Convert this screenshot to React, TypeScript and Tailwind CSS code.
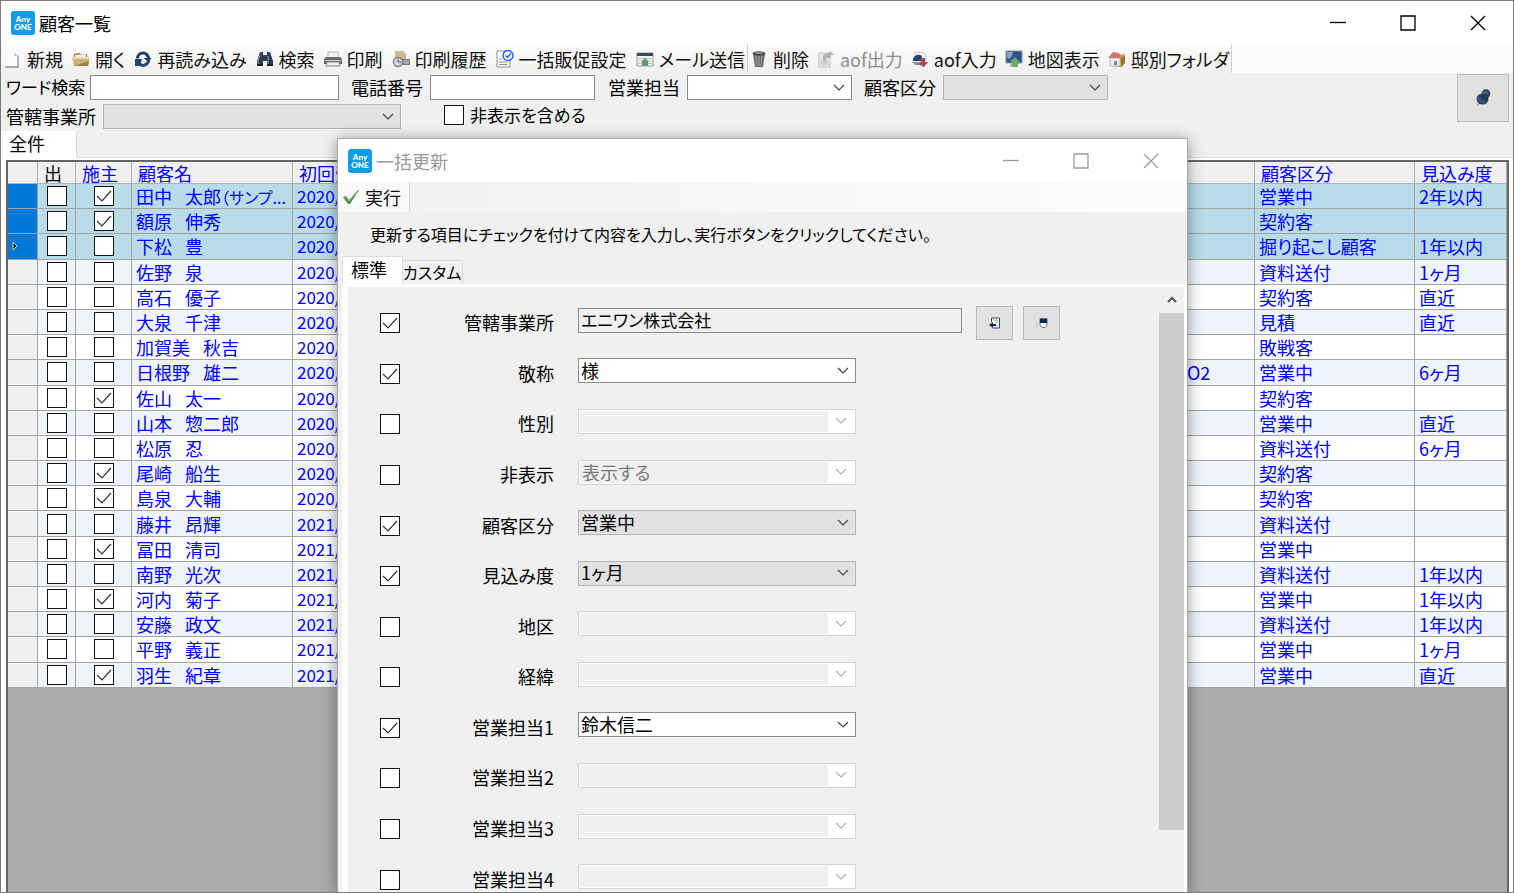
import { useState } from 'react';
import type { ReactNode } from 'react';
import clsx from 'clsx';

interface Customer {
  family: string;
  given: string;
  note?: string;
  owner: boolean;
  date: string;
  code?: string;
  category: string;
  prospect: string;
}

interface UpdateField {
  id: string;
  label: string;
  enabled: boolean;
  value: string;
  kind: 'office' | 'combo' | 'list';
}

const customers: Customer[] = [
  { family: '田中', given: '太郎', note: '（サンプ...', owner: true, date: '2020/', category: '営業中', prospect: '2年以内' },
  { family: '額原', given: '伸秀', owner: true, date: '2020/', category: '契約客', prospect: '' },
  { family: '下松', given: '豊', owner: false, date: '2020/', category: '掘り起こし顧客', prospect: '1年以内' },
  { family: '佐野', given: '泉', owner: false, date: '2020/', category: '資料送付', prospect: '1ヶ月' },
  { family: '高石', given: '優子', owner: false, date: '2020/', category: '契約客', prospect: '直近' },
  { family: '大泉', given: '千津', owner: false, date: '2020/', category: '見積', prospect: '直近' },
  { family: '加賀美', given: '秋吉', owner: false, date: '2020/', category: '敗戦客', prospect: '' },
  { family: '日根野', given: '雄二', owner: false, date: '2020/', code: 'O2', category: '営業中', prospect: '6ヶ月' },
  { family: '佐山', given: '太一', owner: true, date: '2020/', category: '契約客', prospect: '' },
  { family: '山本', given: '惣二郎', owner: false, date: '2020/', category: '営業中', prospect: '直近' },
  { family: '松原', given: '忍', owner: false, date: '2020/', category: '資料送付', prospect: '6ヶ月' },
  { family: '尾崎', given: '船生', owner: true, date: '2020/', category: '契約客', prospect: '' },
  { family: '島泉', given: '大輔', owner: true, date: '2020/', category: '契約客', prospect: '' },
  { family: '藤井', given: '昂輝', owner: false, date: '2021/', category: '資料送付', prospect: '' },
  { family: '冨田', given: '清司', owner: true, date: '2021/', category: '営業中', prospect: '' },
  { family: '南野', given: '光次', owner: false, date: '2021/', category: '資料送付', prospect: '1年以内' },
  { family: '河内', given: '菊子', owner: true, date: '2021/', category: '営業中', prospect: '1年以内' },
  { family: '安藤', given: '政文', owner: false, date: '2021/', category: '資料送付', prospect: '1年以内' },
  { family: '平野', given: '義正', owner: false, date: '2021/', category: '営業中', prospect: '1ヶ月' },
  { family: '羽生', given: '紀章', owner: true, date: '2021/', category: '営業中', prospect: '直近' },
];

const initialFields: UpdateField[] = [
  { id: 'office', label: '管轄事業所', enabled: true, value: 'エニワン株式会社', kind: 'office' },
  { id: 'honorific', label: '敬称', enabled: true, value: '様', kind: 'combo' },
  { id: 'gender', label: '性別', enabled: false, value: '', kind: 'combo' },
  { id: 'hidden', label: '非表示', enabled: false, value: '表示する', kind: 'combo' },
  { id: 'category', label: '顧客区分', enabled: true, value: '営業中', kind: 'list' },
  { id: 'prospect', label: '見込み度', enabled: true, value: '1ヶ月', kind: 'list' },
  { id: 'area', label: '地区', enabled: false, value: '', kind: 'combo' },
  { id: 'route', label: '経緯', enabled: false, value: '', kind: 'combo' },
  { id: 'sales1', label: '営業担当1', enabled: true, value: '鈴木信二', kind: 'combo' },
  { id: 'sales2', label: '営業担当2', enabled: false, value: '', kind: 'combo' },
  { id: 'sales3', label: '営業担当3', enabled: false, value: '', kind: 'combo' },
  { id: 'sales4', label: '営業担当4', enabled: false, value: '', kind: 'combo' },
];

function Icon({ children }: { children: ReactNode }) {
  return (
    <svg viewBox="0 0 18 18" className="size-[18px] shrink-0" aria-hidden="true">
      {children}
    </svg>
  );
}

const NewIcon = () => (
  <Icon>
    <path d="M2 2h8l4 4v11H2z" fill="#fbfbfb" />
    <path d="M10 2l4 4h-4z" fill="#cfcfcf" />
    <path d="M14 6v11H1.500" fill="none" stroke="#8c8c8c" strokeWidth="1.300" />
  </Icon>
);

const OpenIcon = () => (
  <Icon>
    <path d="M2 4l5-1 2 1h6v5H2z" fill="#8d7a55" />
    <path d="M3 5l11-1v4H3z" fill="#f6f1e2" />
    <path d="M0 7h18l-2 9H2z" fill="#cfb27a" />
    <path d="M0 7h18v2H1z" fill="#ecdcb4" />
    <path d="M2 16h14l1-5z" fill="#a08148" />
  </Icon>
);

const ReloadIcon = () => (
  <Icon>
    <path d="M3.500 8.500a5.500 5.500 0 0 1 11 0" fill="none" stroke="#1d3f66" strokeWidth="3" />
    <path d="M14.500 9a5.500 5.500 0 0 1-9 5" fill="none" stroke="#24486f" strokeWidth="3" />
    <path d="M9.500 8h8l-3 4z" fill="#1d3f66" />
    <path d="M1 9h7l-2 7H1z" fill="#24486f" />
  </Icon>
);

const BinocularsIcon = () => (
  <Icon>
    <path d="M4 2h3v3h4V2h3l3 9v5h-6v-5H7v5H1v-5z" fill="#2c3f52" />
    <path d="M4 5L2 11v4M12 6v8" stroke="#8fa5b8" strokeWidth="1" fill="none" />
    <path d="M1 14h6v2H1zM11 14h6v2h-6z" fill="#141f2b" />
  </Icon>
);

const PrinterIcon = () => (
  <Icon>
    <path d="M4 2h10v7H4z" fill="#f2f2f2" stroke="#b8b8b8" />
    <path d="M0 9l2-2h14l2 2v5H0z" fill="#6a6a6a" />
    <path d="M1 10h16v1H1z" fill="#c8c8c8" />
    <path d="M3 12h12l1 4H2z" fill="#ededed" stroke="#8a8a8a" />
  </Icon>
);

const PrintHistoryIcon = () => (
  <Icon>
    <path d="M3 1h9v9H3z" fill="#cdb98c" />
    <path d="M9 9h9v6H9z" fill="#777" />
    <path d="M13 3v6" stroke="#b5b5b5" strokeWidth="2" />
    <path d="M10 11h7M12 13h5" stroke="#ddd" />
    <circle cx="6" cy="12" r="4.500" fill="#d5d8dc" stroke="#7d8286" strokeWidth="1.500" />
    <path d="M6 9v3h3" stroke="#555" fill="none" />
  </Icon>
);

const PromoIcon = () => (
  <Icon>
    <path d="M1 1h13v16H1z" fill="#fafafa" stroke="#8b8b8b" />
    <path d="M3 12h8M3 14.500h8" stroke="#8b8b8b" />
    <path d="M3 9h3" stroke="#8b8b8b" />
    <circle cx="12" cy="5.500" r="5" fill="#fff" stroke="#2160f0" strokeWidth="1.400" />
    <path d="M9.500 5.500l2 2L15 3.500" fill="none" stroke="#2160f0" strokeWidth="1.500" />
  </Icon>
);

const MailIcon = () => (
  <Icon>
    <path d="M1 3h16v13H1z" fill="#f4f4f0" stroke="#99a39b" />
    <path d="M1 3h16v3H1z" fill="#2f4c5e" />
    <path d="M2 8.500h14M2 11h14M2 13.500h14" stroke="#bbc4bd" />
    <path d="M9 8l4 4h-1v4H6v-4H5z" fill="#5f9e6c" />
  </Icon>
);

const TrashIcon = () => (
  <Icon>
    <path d="M3 4h12l-2 13H5z" fill="#696969" />
    <path d="M6 6l1 10M9 6v10M12 6l-1 10" stroke="#a5a5a5" />
    <ellipse cx="9" cy="3.500" rx="6.500" ry="2.200" fill="#4a4a4a" />
    <ellipse cx="9" cy="3" rx="4" ry="1" fill="#8c8c8c" />
  </Icon>
);

const ExportIcon = () => (
  <Icon>
    <path d="M2 3h11v14H2z" fill="#e3e3e3" stroke="#c4c4c4" />
    <path d="M4 14h7M4 12h7" stroke="#bbb" />
    <path d="M6 11V7q0-3 3-3h1l3-3 4 4h-3v1q0 2-2 2H9v3z" fill="#b4b4b4" />
  </Icon>
);

const ImportIcon = () => (
  <Icon>
    <path d="M4 2h8l3 3v9H4z" fill="#eeeeee" stroke="#ccc" />
    <path d="M2 9c2-5 6-5 9-3l-1 5H2z" fill="#2a4467" />
    <path d="M1 12h9l3 3H4z" fill="#8795a3" />
    <path d="M10 8h4v4h3l-4 5-6-3 3-2z" fill="#b04a4f" />
  </Icon>
);

const MapIcon = () => (
  <Icon>
    <path d="M1 1h16v12H1z" fill="#2c5688" stroke="#8796a5" />
    <path d="M2 2h6l-1 4-3 3-2-2z" fill="#8aa9c9" />
    <path d="M5 14h8v3H5z" fill="#b3b9b5" />
    <path d="M10 7l5 5h-2v5H7v-5H5z" fill="#6aa870" />
  </Icon>
);

const HouseFolderIcon = () => (
  <Icon>
    <path d="M9 5l8-1v9l-3 4H8z" fill="#c4a05a" />
    <path d="M12 8l5-2v7l-4 4z" fill="#9a762f" />
    <path d="M2 8h10v8H2z" fill="#efefef" stroke="#b7b7b7" />
    <path d="M0 8l5-6 6 1 3 6-3-1H2z" fill="#d4746a" />
    <path d="M6 11h3v4H6z" fill="#7a8aa0" />
  </Icon>
);

const PinIcon = () => (
  <svg viewBox="0 0 18 20" className="h-5 w-[18px]" aria-hidden="true">
    <path d="M6 14l-3 4" stroke="#a9a9a9" strokeWidth="1.500" />
    <ellipse cx="8.500" cy="11" rx="6" ry="5.500" fill="#2a4663" />
    <path d="M7 8l3-5 5 5-2 4z" fill="#1b3048" />
    <circle cx="12" cy="5.500" r="4.300" fill="#24405c" />
    <ellipse cx="11.500" cy="4.500" rx="2.500" ry="1.500" fill="#4c6a88" />
    <path d="M4 9c0 3 2 5 6 5" stroke="#5b7896" fill="none" />
  </svg>
);

const GreenCheckIcon = () => (
  <Icon>
    <path d="M1 9l3-1 3 4L16 2l1 0L8 16H6z" fill="#4d8a4b" />
    <path d="M2 9l2 0 3 4.500L15 4" fill="none" stroke="#8cba86" />
  </Icon>
);

const PickIcon = () => (
  <svg viewBox="0 0 12 12" className="size-3" aria-hidden="true">
    <path d="M2.500 1h8v10h-7M2.500 1v4" fill="#fff" stroke="#2c4a6e" />
    <path d="M4 3h5M6 5h3M7 9h2" stroke="#b09a90" />
    <path d="M0 8l4-3v2h3v2H4v2z" fill="#0c2a56" />
  </svg>
);

const ClearIcon = () => (
  <svg viewBox="0 0 12 12" className="size-3" aria-hidden="true">
    <path d="M1 4v8" stroke="#cfcfcf" strokeWidth="1.500" />
    <path d="M4 1.500h7V8l-2 2.500H6L4 8z" fill="#fff" stroke="#5a7391" />
    <path d="M4 2h7v4H4z" fill="#0c2a56" />
  </svg>
);

function Chevron({ muted }: { muted?: boolean }) {
  return (
    <svg viewBox="0 0 12 8" className="h-2 w-3 shrink-0" aria-hidden="true">
      <path d="M1 1l5 5 5-5" fill="none" stroke={muted ? '#b0b0b0' : '#444'} strokeWidth="1.200" />
    </svg>
  );
}

function AppLogo() {
  return (
    <span className="flex size-6 shrink-0 flex-col items-center justify-center rounded-[3px] bg-[#109be5] font-[Lato,sans-serif] text-[8px] leading-[8px] font-black text-white">
      <span>Any</span>
      <span>ONE</span>
    </span>
  );
}

function WindowButtons({ color }: { color: string }) {
  return (
    <div className="flex self-stretch">
      <button type="button" aria-label="最小化" className="flex w-[70px] items-center justify-center">
        <svg viewBox="0 0 16 16" className="size-4">
          <path d="M0 7.500h16" stroke={color} strokeWidth="1.300" />
        </svg>
      </button>
      <button type="button" aria-label="最大化" className="flex w-[70px] items-center justify-center">
        <svg viewBox="0 0 16 16" className="size-4">
          <path d="M1 1h14v14H1z" fill="none" stroke={color} strokeWidth="1.300" />
        </svg>
      </button>
      <button type="button" aria-label="閉じる" className="flex w-[70px] items-center justify-center">
        <svg viewBox="0 0 16 16" className="size-4">
          <path d="M1 1l14 14M15 1L1 15" stroke={color} strokeWidth="1.300" />
        </svg>
      </button>
    </div>
  );
}

interface CheckboxProps {
  id?: string;
  label?: string;
  checked: boolean;
  onChange: () => void;
}

function Checkbox({ id, label, checked, onChange }: CheckboxProps) {
  return (
    <span className="inline-grid size-5 shrink-0 align-top">
      <input
        id={id}
        type="checkbox"
        aria-label={label}
        checked={checked}
        onChange={onChange}
        className="size-5 appearance-none border border-[#111] bg-white [grid-area:1/1]"
      />
      {checked && (
        <svg viewBox="0 0 20 20" className="pointer-events-none size-5 [grid-area:1/1]" aria-hidden="true">
          <path d="M3 10l5 5 9-10" fill="none" stroke="#333" strokeWidth="1.200" />
        </svg>
      )}
    </span>
  );
}

interface ComboProps {
  id: string;
  value?: string;
  disabled?: boolean;
  gray?: boolean;
  className: string;
}

function Combo({ id, value = '', disabled, gray, className }: ComboProps) {
  return (
    <span
      className={clsx(
        'flex h-[25px] border',
        disabled && 'border-[#d4d4d4] bg-white p-px',
        !disabled && gray && 'border-[#b4b4b4] bg-[#e1e1e1]',
        !disabled && !gray && 'border-[#8a8a8a] bg-white',
        className,
      )}
    >
      <select
        id={id}
        defaultValue={value}
        disabled={disabled}
        className={clsx(
          'min-w-0 flex-1 appearance-none pb-0.5 pl-0.5 text-lg leading-5 opacity-100 outline-none',
          disabled ? 'bg-[#f0f0f0] text-[#777]' : 'text-black',
        )}
      >
        <option value={value}>{value}</option>
      </select>
      <span className={clsx('flex items-center justify-center', disabled ? 'w-[26px]' : 'w-6')}>
        <Chevron muted={disabled} />
      </span>
    </span>
  );
}

function ToolButton({ icon, label, disabled }: { icon: ReactNode; label: string; disabled?: boolean }) {
  return (
    <button
      type="button"
      disabled={disabled}
      className={clsx('flex items-center gap-[5px] whitespace-nowrap', disabled ? 'text-[#8d8d8d]' : 'text-[#111]')}
    >
      {icon}
      <span>{label}</span>
    </button>
  );
}

function Toolbar() {
  return (
    <div className="flex h-[29px] shrink-0 bg-[#fcfcfc]">
      <div className="flex items-center gap-[9px] bg-linear-to-b from-[#fcfcfc] to-[#f0f0f0] pr-0.5 pl-[3px]">
        <ToolButton icon={<NewIcon />} label="新規" />
        <ToolButton icon={<OpenIcon />} label="開く" />
        <ToolButton icon={<ReloadIcon />} label="再読み込み" />
        <ToolButton icon={<BinocularsIcon />} label="検索" />
        <ToolButton icon={<PrinterIcon />} label="印刷" />
        <ToolButton icon={<PrintHistoryIcon />} label="印刷履歴" />
        <ToolButton icon={<PromoIcon />} label="一括販促設定" />
        <ToolButton icon={<MailIcon />} label="メール送信" />
      </div>
      <div className="flex items-center gap-2 border-x border-[#cfcfcf] bg-linear-to-b from-[#fcfcfc] to-[#f0f0f0] px-0.5">
        <ToolButton icon={<TrashIcon />} label="削除" />
        <ToolButton icon={<ExportIcon />} label="aof出力" disabled />
        <ToolButton icon={<ImportIcon />} label="aof入力" />
        <ToolButton icon={<MapIcon />} label="地図表示" />
        <ToolButton icon={<HouseFolderIcon />} label="邸別フォルダ" />
      </div>
    </div>
  );
}

function SearchPanel() {
  const [includeHidden, setIncludeHidden] = useState(false);

  return (
    <div className="flex shrink-0 items-start justify-between pr-1 pl-[5px]">
      <div>
        <div className="flex h-[29px] items-center">
          <label htmlFor="word" className="w-[84px] pb-0.5 text-[17px] whitespace-nowrap">ワード検索</label>
          <input id="word" type="text" className="h-[25px] w-[249px] border border-[#8a8a8a] bg-white px-1" />
          <label htmlFor="tel" className="ml-3 w-[79px] pb-0.5">電話番号</label>
          <input id="tel" type="text" className="h-[25px] w-[165px] border border-[#8a8a8a] bg-white px-1" />
          <label htmlFor="sales" className="ml-[13px] w-[79px] pb-0.5">営業担当</label>
          <Combo id="sales" className="w-[165px]" />
          <label htmlFor="kubun" className="ml-3 w-[79px] pb-0.5">顧客区分</label>
          <Combo id="kubun" gray className="w-[165px]" />
        </div>
        <div className="flex h-[29px] items-center">
          <label htmlFor="branch" className="w-[97px] pb-0.5">管轄事業所</label>
          <Combo id="branch" gray className="w-[298px]" />
          <div className="ml-[43px] flex items-center gap-1.5 pb-1">
            <Checkbox id="include-hidden" checked={includeHidden} onChange={() => setIncludeHidden(!includeHidden)} />
            <label htmlFor="include-hidden" className="text-[17px]">非表示を含める</label>
          </div>
        </div>
      </div>
      <button
        type="button"
        aria-label="ピン留め"
        className="mt-px flex h-12 w-[52px] items-center justify-center border border-[#bcbcbc] bg-[#e1e1e1]"
      >
        <PinIcon />
      </button>
    </div>
  );
}

function CustomerTable() {
  const [selectedRows] = useState([0, 1, 2]);
  const [owners, setOwners] = useState(customers.map((c) => c.owner));
  const [outputs, setOutputs] = useState(customers.map(() => false));

  const toggle = (list: boolean[], index: number) => list.map((v, i) => (i === index ? !v : v));

  return (
    <table className="h-[526px] w-full table-fixed border-separate border-spacing-0 text-left text-[#0000ff]">
      <colgroup>
        <col className="w-[30px]" />
        <col className="w-[38px]" />
        <col className="w-14" />
        <col className="w-[161px]" />
        <col />
        <col className="w-[72px]" />
        <col className="w-40" />
        <col className="w-[92px]" />
      </colgroup>
      <thead>
        <tr className="h-[22px] bg-[#f0f0f0] leading-5 whitespace-nowrap [&>th]:border-r [&>th]:border-b [&>th]:border-[#b0b0b0] [&>th]:p-0 [&>th]:font-normal">
          <th />
          <th>
            <span className="pl-1.5 text-black">出</span>
          </th>
          <th>
            <span className="pl-1.5">施主</span>
          </th>
          <th>
            <span className="pl-1.5">顧客名</span>
          </th>
          <th>
            <span className="pl-1.5">初回受</span>
          </th>
          <th />
          <th>
            <span className="pl-1.5">顧客区分</span>
          </th>
          <th>
            <span className="pl-1.5">見込み度</span>
          </th>
        </tr>
      </thead>
      <tbody>
        {customers.map((customer, index) => {
          const selected = selectedRows.includes(index);
          return (
            <tr
              key={customer.family + customer.given}
              className={clsx(
                'leading-5 whitespace-nowrap [&>td]:border-r [&>td]:border-b [&>td]:border-[#a3a3a3] [&>td]:px-1 [&>td]:py-0',
                selected ? 'bg-[#b9dce8]' : index % 2 === 1 ? 'bg-[#eff3fa]' : 'bg-white',
              )}
            >
              <td className={selected ? 'bg-[#0078d7]' : 'bg-[#f0f0f0]'}>
                {index === 2 && (
                  <svg viewBox="0 0 6 10" className="h-2.5 w-1.5" aria-hidden="true">
                    <path d="M1 1l4 4-4 4z" fill="#222" stroke="#d8c8a8" />
                  </svg>
                )}
              </td>
              <td className="text-center">
                <Checkbox
                  label={`${customer.family} 出`}
                  checked={outputs[index]}
                  onChange={() => setOutputs(toggle(outputs, index))}
                />
              </td>
              <td className="text-center">
                <Checkbox
                  label={`${customer.family} 施主`}
                  checked={owners[index]}
                  onChange={() => setOwners(toggle(owners, index))}
                />
              </td>
              <td>
                {customer.family}
                <span className="text-[13px] leading-none">　</span>
                {customer.given}
                {customer.note && <span className="text-base leading-none">{customer.note}</span>}
              </td>
              <td className="text-[17px]">{customer.date}</td>
              <td>{customer.code}</td>
              <td>{customer.category}</td>
              <td>{customer.prospect}</td>
            </tr>
          );
        })}
      </tbody>
    </table>
  );
}

function BulkUpdateDialog() {
  const [fields, setFields] = useState(initialFields);

  const toggleField = (id: string) => {
    setFields(fields.map((f) => (f.id === id ? { ...f, enabled: !f.enabled } : f)));
  };

  return (
    <section
      role="dialog"
      aria-label="一括更新"
      className="absolute top-[137px] bottom-0 left-[336px] flex w-[851px] flex-col overflow-hidden border border-b-0 border-[#a8a8a8] bg-[#f0f0f0] shadow-[0_2px_14px_rgba(0,0,0,0.4)]"
    >
      <header className="flex h-[43px] shrink-0 items-center justify-between bg-white pr-px pl-2.5">
        <h2 className="flex items-center gap-1 text-[#999]">
          <AppLogo />
          一括更新
        </h2>
        <WindowButtons color="#999999" />
      </header>

      <div className="flex h-[30px] shrink-0 bg-linear-to-r from-[#f1f1f1] to-[#fcfcfc]">
        <div className="flex items-center border-r border-[#d5d5d5] bg-[#f9f9f9] pr-2 pl-1">
          <ToolButton icon={<GreenCheckIcon />} label="実行" />
        </div>
      </div>

      <p className="h-11 shrink-0 pl-8 text-base leading-[44px]">
        更新する項目にチェックを付けて内容を入力し、実行ボタンをクリックしてください。
      </p>

      <div role="tablist" className="flex shrink-0 items-end pl-1">
        <button
          type="button"
          role="tab"
          aria-selected="true"
          className="h-7 w-[61px] border border-b-0 border-[#dcdcdc] bg-white pb-1 pl-2 text-left"
        >
          標準
        </button>
        <button
          type="button"
          role="tab"
          aria-selected="false"
          className="h-6 w-[60px] border border-b-0 border-l-0 border-[#dcdcdc] pb-0.5 text-left text-base leading-5 whitespace-nowrap"
        >
          カスタム
        </button>
      </div>

      <div className="ml-1 flex min-h-0 flex-1 border-t-3 border-r-3 border-l-6 border-white">
        <div className="min-w-0 flex-1 overflow-hidden pt-[11px] pl-8">
          <div className="flex h-[607px] flex-col">
            {fields.map((field) => (
              <div key={field.id} className="flex flex-1 items-center">
                <Checkbox
                  label={`${field.label}を更新`}
                  checked={field.enabled}
                  onChange={() => toggleField(field.id)}
                />
                <label htmlFor={field.id} className="w-[154px] pb-0.5 text-right">
                  {field.label}
                </label>
                <div className="ml-6 pb-1.5">
                  {field.kind === 'office' ? (
                    <input
                      id={field.id}
                      type="text"
                      readOnly
                      value={field.value}
                      className="block h-[25px] w-96 border border-[#8a8a8a] bg-[#f0f0f0] pb-0.5 pl-0.5 text-[17px] leading-5"
                    />
                  ) : (
                    <Combo
                      id={field.id}
                      value={field.value}
                      disabled={!field.enabled}
                      gray={field.kind === 'list'}
                      className="w-[278px]"
                    />
                  )}
                </div>
                {field.kind === 'office' && (
                  <div className="ml-3.5 flex gap-2.5">
                    <button
                      type="button"
                      aria-label="選択"
                      className="flex h-[34px] w-[37px] items-center justify-center border border-[#b8b8b8] bg-[#e1e1e1]"
                    >
                      <PickIcon />
                    </button>
                    <button
                      type="button"
                      aria-label="クリア"
                      className="flex h-[34px] w-[37px] items-center justify-center border border-[#b8b8b8] bg-[#e1e1e1]"
                    >
                      <ClearIcon />
                    </button>
                  </div>
                )}
              </div>
            ))}
          </div>
        </div>
        <div className="flex w-[25px] flex-col">
          <div className="flex h-[26px] items-center justify-center">
            <svg viewBox="0 0 12 8" className="h-2 w-3" aria-hidden="true">
              <path d="M2 6l4-4 4 4" fill="none" stroke="#555" strokeWidth="2" />
            </svg>
          </div>
          <div className="h-[517px] bg-[#cdcdcd]" />
        </div>
      </div>
    </section>
  );
}

export default function App() {
  return (
    <main className="relative flex h-screen flex-col overflow-hidden border border-[#7a7a7a] bg-[#f0f0f0] font-['Noto_Sans_CJK_JP',sans-serif] text-lg leading-6 text-black [font-feature-settings:'palt']">
      <header className="flex h-[43px] shrink-0 items-center justify-between bg-white pl-2.5">
        <h1 className="flex items-center gap-1">
          <AppLogo />
          顧客一覧
        </h1>
        <WindowButtons color="#000000" />
      </header>

      <Toolbar />
      <SearchPanel />

      <div role="tablist" className="flex h-[27px] shrink-0">
        <button type="button" role="tab" aria-selected="true" className="w-[75px] bg-white pb-1 pl-2 text-left">
          全件
        </button>
        <div className="flex-1 border-b border-l border-[#dcdcdc]" />
      </div>

      <div className="flex min-h-0 flex-1 flex-col bg-white pt-0.5 pr-1 pl-[5px]">
        <div className="min-h-0 flex-1 overflow-hidden border-2 border-b-0 border-[#666] bg-[#ababab]">
          <CustomerTable />
        </div>
      </div>

      <BulkUpdateDialog />
    </main>
  );
}
